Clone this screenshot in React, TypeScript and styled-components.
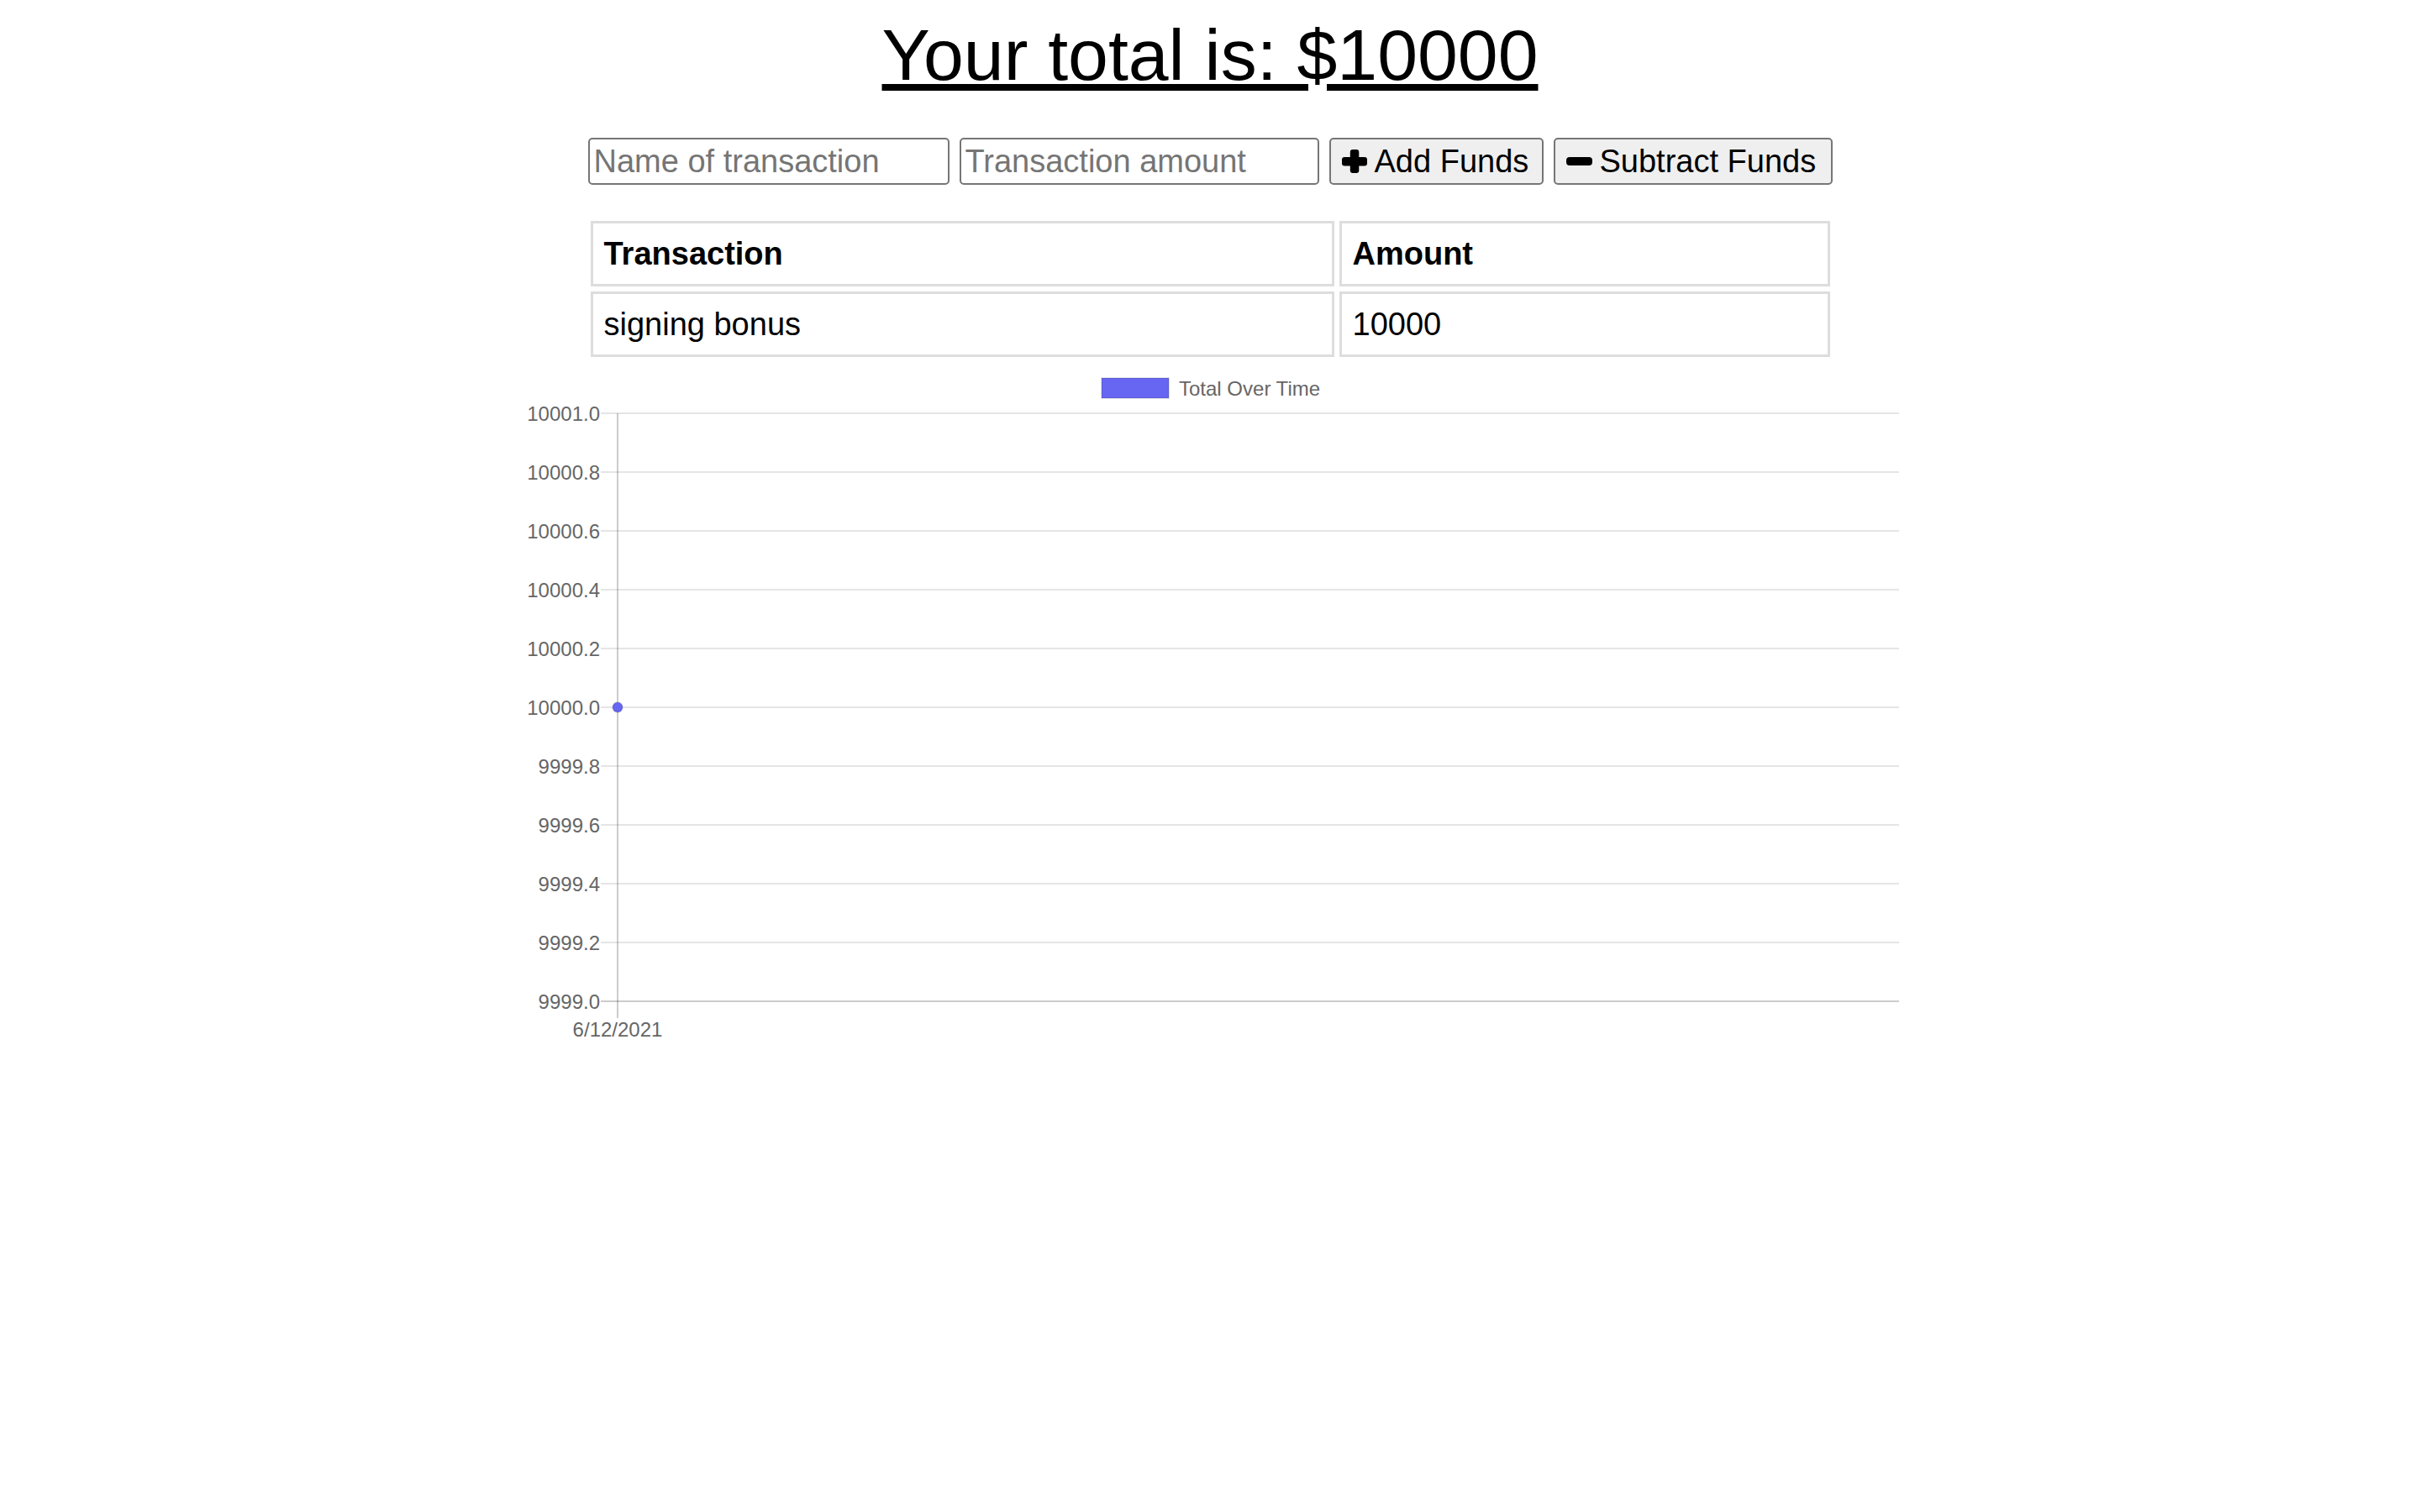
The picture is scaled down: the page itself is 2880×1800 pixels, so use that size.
import React from "react";
import styled, { createGlobalStyle } from "styled-components";

const Global = createGlobalStyle`
  html, body { margin: 0; padding: 0; background: #ffffff; }
  body { font-family: "Liberation Sans", Arial, Helvetica, sans-serif; color: #000; }
`;

const Page = styled.div`
  width: 2880px;
  min-height: 1800px;
  display: flex;
  flex-direction: column;
  align-items: center;
`;

const Title = styled.h1`
  margin: 16px 0 0;
  font-size: 86px;
  font-weight: 400;
  line-height: normal;
  text-decoration: underline;
  text-align: center;
`;

const Form = styled.div`
  margin-top: 49px;
  display: flex;
  gap: 12px;
  justify-content: center;
`;

const Field = styled.input<{ $w: number }>`
  box-sizing: border-box;
  width: ${(p) => p.$w}px;
  height: 56px;
  margin: 0;
  padding: 0 5px;
  border: 2px solid #767676;
  border-radius: 5px;
  font-family: "Liberation Sans", Arial, sans-serif;
  font-size: 38px;
  color: #000;
  background: #fff;
  outline: none;
  &::placeholder { color: #757575; opacity: 1; }
`;

const Button = styled.button<{ $w: number }>`
  box-sizing: border-box;
  width: ${(p) => p.$w}px;
  height: 56px;
  margin: 0;
  padding: 0 0 0 13px;
  border: 2px solid #767676;
  border-radius: 5px;
  background: #efefef;
  display: flex;
  align-items: center;
  gap: 9px;
  font-family: "Liberation Sans", Arial, sans-serif;
  font-size: 38px;
  color: #000;
  cursor: pointer;
`;

const Icon = styled.svg`
  flex: none;
  display: block;
`;

const Table = styled.table`
  margin-top: 37px;
  border-collapse: separate;
  border-spacing: 6px;
  width: 1487px;
  font-size: 38px;
`;

const Head = styled.th<{ $w: number }>`
  box-sizing: border-box;
  width: ${(p) => p.$w}px;
  border: 3px solid #dddddd;
  padding: 15px 13px 14px;
  text-align: left;
  font-weight: 700;
  line-height: normal;
`;

const Cell = styled.td`
  border: 3px solid #dddddd;
  padding: 15px 13px 14px;
  text-align: left;
  font-weight: 400;
  line-height: normal;
`;

const ChartWrap = styled.div`
  width: 1640px;
  height: 820px;
`;

const ChartSvg = styled.svg`
  display: block;
  font-family: "Liberation Sans", Arial, Helvetica, sans-serif;
`;

const PlusIcon = () => (
  <Icon width="30" height="28" viewBox="0 0 30 28">
    <rect x="0" y="9" width="30" height="10.5" rx="3" fill="#000" />
    <rect x="9.8" y="0" width="10.5" height="28" rx="3" fill="#000" />
  </Icon>
);

const MinusIcon = () => (
  <Icon width="31" height="10" viewBox="0 0 31 10">
    <rect x="0" y="0" width="31" height="10" rx="4" fill="#000" />
  </Icon>
);

const POINT = "#6666f2";
const GRID = "rgba(0,0,0,0.1)";
const TEXT = "#666666";

const Chart = () => {
  const labels = ["10001.0", "10000.8", "10000.6", "10000.4", "10000.2", "10000.0", "9999.8", "9999.6", "9999.4", "9999.2", "9999.0"];
  const top = 61;
  const step = 70;
  const axisX = 115;
  return (
    <ChartWrap>
      <ChartSvg width="1640" height="820" viewBox="0 0 1640 820">
        <rect x="691" y="19" width="80" height="24" fill={POINT} stroke={GRID} strokeWidth="2" />
        <text x="783" y="31" fontSize="24" fill={TEXT} dominantBaseline="central">Total Over Time</text>
        {labels.map((l, i) => {
          const y = top + i * step;
          return (
            <g key={l}>
              <line x1="95" x2="1640" y1={y} y2={y} stroke={i === labels.length - 1 ? "rgba(0,0,0,0.2)" : GRID} strokeWidth="2" />
              <text x="94" y={y} fontSize="24" fill={TEXT} textAnchor="end" dominantBaseline="central">{l}</text>
            </g>
          );
        })}
        <line x1={axisX} x2={axisX} y1={top} y2={top + 10 * step + 20} stroke="rgba(0,0,0,0.2)" strokeWidth="2" />
        <text x={axisX} y="794" fontSize="24" fill={TEXT} textAnchor="middle" dominantBaseline="central">6/12/2021</text>
        <circle cx={axisX} cy={top + 5 * step} r="6" fill={POINT} stroke={GRID} strokeWidth="2" />
      </ChartSvg>
    </ChartWrap>
  );
};

export default function App() {
  return (
    <>
      <Global />
      <Page>
        <Title>Your total is: $10000</Title>
        <Form>
          <Field $w={430} type="text" placeholder="Name of transaction" />
          <Field $w={428} type="number" placeholder="Transaction amount" />
          <Button $w={255}>
            <PlusIcon />
            Add Funds
          </Button>
          <Button $w={332}>
            <MinusIcon />
            Subtract Funds
          </Button>
        </Form>
        <Table>
          <thead>
            <tr>
              <Head $w={885}>Transaction</Head>
              <Head $w={584}>Amount</Head>
            </tr>
          </thead>
          <tbody>
            <tr>
              <Cell>signing bonus</Cell>
              <Cell>10000</Cell>
            </tr>
          </tbody>
        </Table>
        <Chart />
      </Page>
    </>
  );
}
